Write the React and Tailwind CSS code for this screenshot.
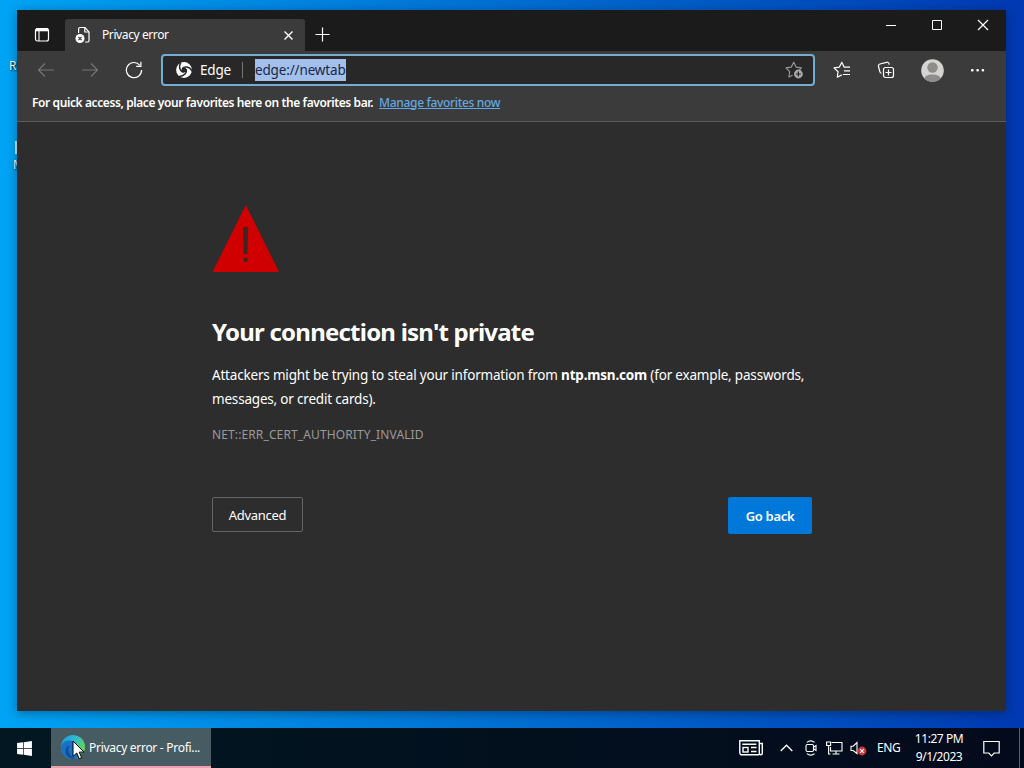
import { FaWindows } from 'react-icons/fa';

function TabActionsIcon() {
    return (
        <svg width="16" height="16" viewBox="0 0 16 16" fill="none" stroke="white">
            <rect x="1.5" y="1.5" width="13" height="12.5" rx="2" strokeWidth="1.2" />
            <path d="M2 2.8h12" strokeWidth="3" />
            <path d="M5 4v10" strokeWidth="1.1" />
        </svg>
    );
}

function ErrorPageIcon() {
    return (
        <svg width="16" height="18" viewBox="0 0 16 18" fill="none" stroke="white" strokeWidth="1.2">
            <path d="M3.6 7V3a1.5 1.5 0 0 1 1.5-1.5H10L14 6v8.5a1.5 1.5 0 0 1-1.5 1.5H10" />
            <path d="M9.8 1.6V6H14" />
            <circle cx="5" cy="12.5" r="4.5" fill="white" stroke="none" />
            <path d="M3.4 10.9l3.2 3.2M6.6 10.9l-3.2 3.2" stroke="#333333" strokeWidth="1.1" />
        </svg>
    );
}

function ArrowIcon({ flip }) {
    return (
        <svg width="18" height="16" viewBox="0 0 18 16" fill="none" stroke="#757575" strokeWidth="1.2" className={flip ? 'rotate-180' : ''}>
            <path d="M17 8H1.5M8 1.5L1.5 8 8 14.5" />
        </svg>
    );
}

function ReloadIcon() {
    return (
        <svg width="18" height="18" viewBox="0 0 18 18" fill="none" stroke="white" strokeWidth="1.2">
            <path d="M16.6 9A7.6 7.6 0 1 1 14.9 4.3" />
            <path d="M15.9 0.8V5.4H11.2" />
        </svg>
    );
}

// white disc cut into three blades around a dark hub
function EdgeMonoIcon() {
    return (
        <svg width="16" height="16" viewBox="0 0 16 16">
            <circle cx="8" cy="8" r="7.9" fill="white" />
            <circle cx="8" cy="8" r="2.5" fill="#272827" />
            <g fill="none" stroke="#272827" strokeWidth="1.5">
                <path d="M6 7.2C7.200 3.800 12.600 3.200 16.200 7" transform="rotate(15 8 8)" />
                <path d="M6 7.2C7.200 3.800 12.600 3.200 16.200 7" transform="rotate(135 8 8)" />
                <path d="M6 7.2C7.200 3.800 12.600 3.200 16.200 7" transform="rotate(255 8 8)" />
            </g>
        </svg>
    );
}

function AddFavoriteIcon() {
    return (
        <svg width="18" height="18" viewBox="0 0 18 18" fill="none" stroke="#9a9a9a" strokeWidth="1.1">
            <path d="M7.500 14.200L3.900 16l.8-5.300L1 6.900l5.300-.8L8.700 1.300l2.400 4.800 5.300.8-2 2" strokeLinejoin="round" />
            <circle cx="13.400" cy="13" r="4.400" fill="#aaaaaa" stroke="none" />
            <path d="M13.400 10.600v4.800M11 13h4.800" stroke="#252525" strokeWidth="1.200" />
        </svg>
    );
}

function FavoritesIcon() {
    return (
        <svg width="18" height="18" viewBox="0 0 18 18" fill="none" stroke="white" strokeWidth="1.2">
            <path d="M8.800 13.900L4.300 16.200l.8-5.500L1 6.900l5.400-.8L8.800 1.300l2.300 4.800h5.900M11 9.800h6M10 13.500h7" strokeLinejoin="round" />
        </svg>
    );
}

function CollectionsIcon() {
    return (
        <svg width="18" height="18" viewBox="0 0 18 18" fill="none" stroke="white" strokeWidth="1.2">
            <path d="M4.500 12.200A2 2 0 0 1 2.900 10.800L1.500 5.500A2 2 0 0 1 2.900 3L9.500 1.300A2 2 0 0 1 12 2.700l.2 1" />
            <rect x="6.500" y="6.500" width="10" height="10" rx="2" />
            <path d="M11.500 8.500v6M8.500 11.500h6" />
        </svg>
    );
}

function ProfileIcon() {
    return (
        <svg width="23" height="23" viewBox="0 0 23 23">
            <clipPath id="avatar">
                <circle cx="11.5" cy="11.5" r="11.3" />
            </clipPath>
            <g clipPath="url(#avatar)">
                <rect width="23" height="23" fill="#d5d4d2" />
                <circle cx="11.500" cy="8.500" r="5.200" fill="#8f8d8a" />
                <path d="M3.500 20c0-3 3-4.500 8-4.500s8 1.500 8 4.500v4h-16z" fill="#8f8d8a" />
            </g>
        </svg>
    );
}

function WarningIcon() {
    return (
        <svg width="67" height="67" viewBox="0 0 67 67">
            <path d="M33.800 0L67 67H0.500z" fill="#d00000" />
            <path d="M31 22.500q2.600-1.500 5.200 0l-.8 26q-1.800 1.500-3.600 0z" fill="#402420" />
            <rect x="31.300" y="52.500" width="4.600" height="4.500" rx="1.800" fill="#402420" />
        </svg>
    );
}

function EdgeIcon() {
    return (
        <svg width="24" height="24" viewBox="0 0 24 24">
            <defs>
                <linearGradient id="edgeTop" x1="0" y1="0" x2="1" y2="0.5">
                    <stop offset="0" stopColor="#2497dc" />
                    <stop offset="0.5" stopColor="#2cb9d3" />
                    <stop offset="1" stopColor="#65d65a" />
                </linearGradient>
            </defs>
            <circle cx="12" cy="12" r="12" fill="url(#edgeTop)" />
            <path d="M0 13C0 8 4 5.500 8.500 5.500c3 0 5.500 1.500 6.500 4L12 17l9 3.500C18.500 23 15.500 24 12 24 5.500 24 0 19 0 13z" fill="#1771c6" />
            <path d="M8.500 10c-3 5 0 11.500 6 13.800C9 24.500 4 20.500 4.500 15.500c.2-2.500 1.800-4.500 4-5.500z" fill="#124c96" />
            {/* page colour shows through right of the wave */}
            <path d="M13 17c2.500 2 7 1.800 9.500.5L25 20l-5 5-4.500-.5 5-3.800C17.500 21 14.500 19.500 13 17z" fill="#475b62" />
        </svg>
    );
}

function Cursor() {
    return (
        <svg width="13" height="20" viewBox="0 0 13 20" className="absolute left-[21px] top-[12px]">
            <path d="M1 1v15.500l3.700-3.500 2.500 5.700 2.500-1.100-2.500-5.500H12z" fill="white" stroke="black" />
        </svg>
    );
}

function NewsIcon() {
    return (
        <svg width="24" height="16" viewBox="0 0 24 16" fill="none" stroke="white" strokeWidth="1.4">
            <path d="M20 14.800H3A2 2 0 0 1 .8 13V.8h19.500v12.500c0 2 3 2 3 0V3.500h-3" />
            <rect x="4" y="7.500" width="5" height="4.500" />
            <path d="M3.300 4.200h14M12 7.500h5.500M12 11.500h5.500" />
        </svg>
    );
}

function MeetNowIcon() {
    return (
        <svg width="12" height="16" viewBox="0 0 12 16" fill="none" stroke="white" strokeWidth="1.1">
            <path d="M2 2.300C4 .4 7.500.4 9.500 2.300M2 13.700c2 1.900 5.500 1.900 7.500 0" />
            <rect x="1" y="4.500" width="7.500" height="7" rx="1.500" />
            <path d="M8.500 7.200L11 5.500v5L8.500 8.800" />
        </svg>
    );
}

function NetworkIcon() {
    return (
        <svg width="17" height="14" viewBox="0 0 17 14" fill="none" stroke="white" strokeWidth="1.1">
            <path d="M5.500 1.500h10.500v8.500H4.500V6M6.500 13h7M10 10v3" />
            <path d="M.6 1h4v3.500h-4zM2.600 4.500V13H4.500" />
        </svg>
    );
}

function VolumeIcon() {
    return (
        <svg width="17" height="15" viewBox="0 0 17 15" fill="none">
            <path d="M1 5.200h2.200L7 1.500v11L3.200 9.500H1z" stroke="white" strokeWidth="1.1" />
            <circle cx="12" cy="10" r="4.400" fill="#d13438" />
            <path d="M10.200 8.200l3.600 3.600M13.800 8.200l-3.600 3.600" stroke="white" strokeWidth="1.1" />
        </svg>
    );
}

function TitleBar() {
    return (
        <div className="flex h-[41px] bg-[#1b1b1b]">
            <div className="flex w-12 items-start justify-center pt-[17px] pl-0.5">
                <TabActionsIcon />
            </div>
            <div className="mt-[9px] flex h-8 w-60 items-center rounded-t-[3px] bg-[#3b3b3b] pl-[10px] pr-[11px]">
                <ErrorPageIcon />
                <span className="ml-[11px] flex-1 text-xs tracking-[-0.4px]">Privacy error</span>
                <svg width="11" height="11" viewBox="0 0 11 11" stroke="white" strokeWidth="1.4">
                    <path d="M1.500 1.500l8 8M9.500 1.500l-8 8" />
                </svg>
            </div>
            <svg width="15" height="15" viewBox="0 0 15 15" stroke="white" strokeWidth="1.2" className="mt-[17px] ml-[10px]">
                <path d="M7.500 0.500v14M.5 7.500h14" />
            </svg>
            <div className="ml-auto flex pt-[9px]">
                <svg width="46" height="12" viewBox="0 0 46 12" stroke="white" fill="none">
                    <path d="M18 6.500h10" />
                </svg>
                <svg width="46" height="12" viewBox="0 0 46 12" stroke="white" fill="none">
                    <path d="M18.500 1.500h9v9h-9z" />
                </svg>
                <svg width="46" height="12" viewBox="0 0 46 12" stroke="white" fill="none" strokeWidth="1.2">
                    <path d="M18 1l10 10M28 1L18 11" />
                </svg>
            </div>
        </div>
    );
}

function Toolbar() {
    return (
        <div className="flex h-[38px] items-center bg-[#3b3b3b] pl-5">
            <ArrowIcon />
            <div className="ml-[26px]"><ArrowIcon flip /></div>
            <div className="ml-[26px]"><ReloadIcon /></div>
            <div className="ml-[18px] flex h-8 w-[654px] items-center rounded-[4px] border-2 border-[#74acd4] bg-[#272827] pl-[13px] pr-[10px]">
                <EdgeMonoIcon />
                <span className="ml-2 w-[31px] text-[13.5px] whitespace-nowrap tracking-[-0.2px]">Edge</span>
                <div className="ml-[11px] h-4 w-px bg-[#777777]" />
                <span className="ml-[12px] h-[22px] w-[91px] bg-[#a3c0ed] text-[13.5px] leading-[22px] whitespace-nowrap tracking-[-0.15px] text-[#1a2848]">edge://newtab</span>
                <div className="ml-auto"><AddFavoriteIcon /></div>
            </div>
            <div className="ml-[18px]"><FavoritesIcon /></div>
            <div className="ml-[26px]"><CollectionsIcon /></div>
            <div className="ml-[26px]"><ProfileIcon /></div>
            <svg width="14" height="4" viewBox="0 0 14 4" fill="white" className="ml-[27px]">
                <rect x="0" y="1" width="2.600" height="2.600" rx="1" />
                <rect x="5.300" y="1" width="2.600" height="2.600" rx="1" />
                <rect x="10.600" y="1" width="2.600" height="2.600" rx="1" />
            </svg>
        </div>
    );
}

function ErrorPage() {
    return (
        <main className="flex-1 bg-[#2d2d2d] pt-[83px] pl-[195px]">
            <div className="w-[600px]">
                <WarningIcon />
                <h1 className="mt-[44px] text-2xl leading-8 font-bold whitespace-nowrap tracking-[-0.78px]">Your connection isn't private</h1>
                <p className="mt-[15px] text-[13.5px] leading-6 whitespace-nowrap tracking-[-0.19px]">
                    Attackers might be trying to steal your information from <strong>ntp.msn.com</strong> (for example, passwords,
                    <br />
                    messages, or credit cards).
                </p>
                <div className="mt-[14px] text-xs leading-5 tracking-[0.12px] text-[#9a9a9a]">
                    <span>NET::ERR_CERT_AUTHORITY_INVALID</span>
                </div>
                <div className="mt-[52px] flex items-start justify-between">
                    <button className="h-[35px] w-[91px] rounded-[2px] border border-[#666666] pt-[3px] text-[13px] whitespace-nowrap tracking-[-0.3px]">
                        <span>Advanced</span>
                    </button>
                    <button className="h-[37px] w-[84px] rounded-[2px] bg-[#0078d9] pt-[3px] text-[13px] font-semibold whitespace-nowrap tracking-[-0.3px]">
                        <span>Go back</span>
                    </button>
                </div>
            </div>
        </main>
    );
}

function Taskbar() {
    return (
        <footer className="flex h-10 bg-linear-to-r from-[#021722] to-[#030a1b]">
            <div className="flex w-[51px] items-center pl-4">
                <FaWindows size={17} />
            </div>
            <div className="relative flex w-40 items-center border-b-2 border-[#f0a0ac] bg-[#475b62] pl-[10px]">
                <EdgeIcon />
                <span className="ml-1 pt-px text-xs whitespace-nowrap tracking-[-0.29px]">Privacy error - Profi...</span>
                <Cursor />
            </div>
            <div className="ml-auto flex items-center">
                <NewsIcon />
                <svg width="13" height="8" viewBox="0 0 13 8" fill="none" stroke="white" strokeWidth="1.3" className="ml-[17px]">
                    <path d="M.7 7l5.800-5.800L12.300 7" />
                </svg>
                <div className="ml-[12px]"><MeetNowIcon /></div>
                <div className="ml-[9px]"><NetworkIcon /></div>
                <div className="ml-[7px]"><VolumeIcon /></div>
                <span className="ml-[10px] w-[24px] text-xs whitespace-nowrap tracking-[-0.4px]">ENG</span>
                <div className="ml-[12px] flex w-[52px] flex-col items-center text-xs leading-[18px] whitespace-nowrap tracking-[-0.45px]">
                    <span>11:27 PM</span>
                    <span>9/1/2023</span>
                </div>
                <svg width="17" height="17" viewBox="0 0 17 17" fill="none" stroke="white" strokeWidth="1.2" className="ml-[18px]">
                    <path d="M.8 1.500h15.400v11.500h-5L8.500 15.800 5.800 13H.8z" />
                </svg>
                <div className="ml-[19px] h-10 w-px bg-[#56616b]" />
                <div className="w-[4px]" />
            </div>
        </footer>
    );
}

export default function App() {
    return (
        <div className="flex h-[768px] w-[1024px] flex-col overflow-hidden font-['Noto_Sans','Open_Sans',sans-serif] text-white">
            <div className="relative h-[728px] bg-linear-to-r from-[#00a4f5] from-0% via-[#0074d6] via-45% to-[#0038b2] to-100% pt-[10px] pl-[17px]">
                {/* Desktop shortcuts, mostly hidden by the window */}
                <span className="absolute left-[9px] top-[58px] text-xs [text-shadow:1px_1px_2px_black]">R</span>
                <div className="absolute left-[15px] top-[141px] h-[13px] w-[3px] bg-[#cce8f8]" />
                <span className="absolute left-[13px] top-[157px] text-xs [text-shadow:1px_1px_2px_black]">M</span>

                <div className="relative flex h-[701px] w-[989px] flex-col shadow-[0_2px_10px_rgba(0,0,0,0.35)]">
                    <TitleBar />
                    <Toolbar />
                    <div className="flex h-[33px] items-center border-b border-[#5c5c5c] bg-[#3b3b3b] pb-[5px] pl-[15px] text-xs">
                        <span className="font-semibold whitespace-nowrap tracking-[-0.4px]">For quick access, place your favorites here on the favorites bar.</span>
                        <a className="ml-[6px] font-medium whitespace-nowrap tracking-[-0.33px] text-[#63a8e0] underline">Manage favorites now</a>
                    </div>
                    <ErrorPage />
                </div>
            </div>
            <Taskbar />
        </div>
    );
}
